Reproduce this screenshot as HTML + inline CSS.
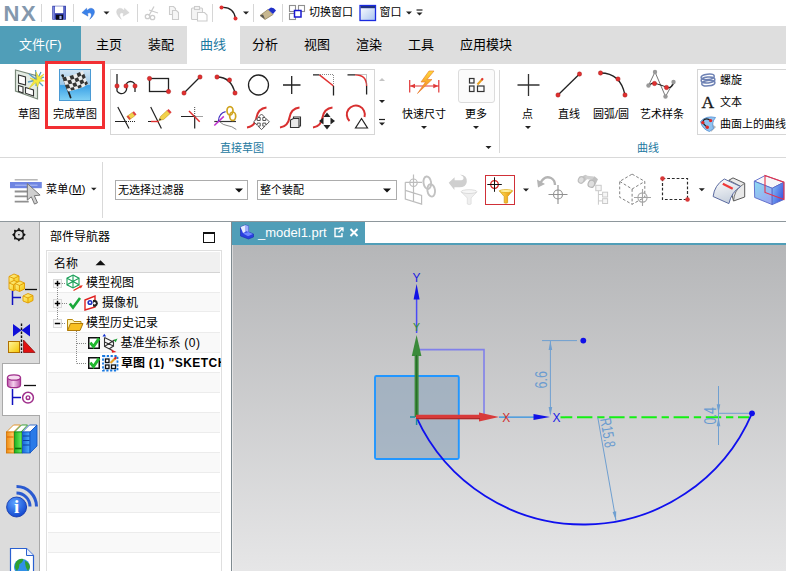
<!DOCTYPE html>
<html lang="zh-CN">
<head>
<meta charset="utf-8">
<title>NX</title>
<style>
html,body{margin:0;padding:0;}
body{width:786px;height:571px;overflow:hidden;background:#fff;position:relative;
 font-family:"Liberation Sans","Noto Sans CJK SC",sans-serif;font-size:11px;color:#000;}
.a{position:absolute;}
.t{position:absolute;white-space:nowrap;line-height:1;}
svg{position:absolute;overflow:visible;}
/* title bar */
#nx{left:3.500px;top:3px;font-size:22px;font-weight:bold;color:#8498ad;letter-spacing:1.700px;}
.vsep{position:absolute;width:1px;background:#d6d6d6;}
/* tab bar */
#tabbar{left:0;top:26px;width:786px;height:38px;background:#dedede;}
#filetab{left:0;top:26px;width:81px;height:38px;background:#509eb8;}
#acttab{left:187px;top:26px;width:53px;height:38px;background:#fff;}
.tab{font-size:13px;top:38px;color:#000;}
/* ribbon */
.rl{font-size:11px;top:109px;}
.gl{font-size:11px;color:#1b78a0;top:143px;}
</style>
</head>
<body>
<!-- TITLE BAR -->
<div class="t" id="nx">NX</div>
<div class="vsep" style="left:41px;top:4px;height:18px"></div>
<div class="vsep" style="left:73px;top:4px;height:18px"></div>
<div class="vsep" style="left:137px;top:4px;height:18px"></div>
<div class="vsep" style="left:212px;top:4px;height:18px"></div>
<div class="vsep" style="left:253px;top:4px;height:18px"></div>
<div class="vsep" style="left:282px;top:4px;height:18px"></div>
<!--TITLE-START-->
<svg style="left:0;top:0" width="786" height="26" viewBox="0 0 786 26">
 <defs><linearGradient id="wg" x1="0" y1="0" x2="1" y2="1"><stop offset="0" stop-color="#fff"/><stop offset="1" stop-color="#a8c4f0"/></linearGradient></defs>
 <!-- save -->
 <rect x="52.300" y="5.800" width="13.600" height="13.900" fill="#2c38a6"/>
 <rect x="53" y="6.500" width="1.600" height="12.500" fill="#7c86e0"/>
 <rect x="63.700" y="6.500" width="1.500" height="12.500" fill="#5a66cc"/>
 <rect x="55" y="6.300" width="8.300" height="6.900" fill="#fff"/>
 <rect x="56" y="14.800" width="7" height="4.900" fill="#0a0a18"/>
 <rect x="59.400" y="15.800" width="2.200" height="3.200" fill="#9fb0ee"/>
 <!-- undo -->
 <path d="M81.900 12.700 L86.600 8.200 L87 10.600 Q91 6.300 94 9.800 Q96 14 89.800 19.300 Q92.600 14.600 90.500 13.100 Q89 12.300 87.600 13.600 L88 16.200 Z" fill="#3a82ea" stroke="#2a62c8" stroke-width="0.400"/>
 <path d="M103.500 11.500 h6 l-3 3 z" fill="#222"/>
 <!-- redo grey -->
 <path d="M129.200 12.700 L124.500 8.200 L124.100 10.600 Q120.100 6.300 117.100 9.800 Q115.100 14 121.300 19.300 Q118.500 14.600 120.600 13.100 Q122.100 12.300 123.500 13.600 L123.100 16.200 Z" fill="#d8d8d8" stroke="#cccccc" stroke-width="0.400"/>
 <!-- scissors grey -->
 <g fill="none" stroke="#cccccc" stroke-width="1.300">
  <path d="M154 6.500 l-5 9 M149 10 l9 3"/><circle cx="147.500" cy="16.500" r="2.200"/><circle cx="152.500" cy="17.500" r="2.200"/>
 </g>
 <!-- copy grey -->
 <g fill="#f6f6f6" stroke="#cccccc" stroke-width="1.100">
  <path d="M169.500 6.500 h4 l2 2 v6 h-6 z"/><path d="M172.500 10.500 h4 l2 2 v7 h-6 z"/>
 </g>
 <!-- paste grey -->
 <g fill="#f4f4f4" stroke="#cccccc" stroke-width="1.100">
  <rect x="191.500" y="8" width="11" height="11.500" rx="1"/><rect x="194.500" y="6.500" width="5" height="3"/>
  <path d="M197.500 12.500 h7 l2.500 2.500 v6 h-9.500 z" fill="#fff"/>
 </g>
 <!-- arc icon -->
 <path d="M221.500 7.500 q12 -1 14 11" fill="none" stroke="#222" stroke-width="1.300"/>
 <circle cx="221.500" cy="7.500" r="2" fill="#e03030"/><circle cx="235.500" cy="18.500" r="2" fill="#e03030"/>
 <path d="M243 11.500 h6 l-3 3 z" fill="#222"/>
 <!-- brush -->
 <path d="M260 15.500 l8 -6 l5 5 l-8 5 z" fill="#c8b890" stroke="#8a7a50" stroke-width="0.700"/>
 <path d="M268 9.500 l3 -2 q3 0 5 3 l-3 3.500 z" fill="#2030c8"/>
 <path d="M260 15.500 l3 -1 l2 4.500 z" fill="#555"/>
 <!-- switch window -->
 <g fill="#fff" stroke="#909090" stroke-width="1.100">
  <rect x="289.500" y="5.500" width="6" height="6"/><rect x="298.500" y="5.500" width="6" height="6"/><rect x="289.500" y="13.500" width="6" height="6"/>
 </g>
 <rect x="294.500" y="10.500" width="6.500" height="6.500" fill="#fff" stroke="#1818d0" stroke-width="1.500"/>
 <!-- window -->
 <rect x="360" y="5.500" width="15.500" height="15" fill="url(#wg)" stroke="#1a2ae0" stroke-width="1.300"/>
 <rect x="360.500" y="6" width="14.500" height="2.200" fill="#203080"/>
 <path d="M406 11.500 h6 l-3 3 z" fill="#222"/>
 <path d="M416.500 10 h6" stroke="#222" stroke-width="1.200"/>
 <path d="M416.500 12.500 h6 l-3 3 z" fill="#222"/>
</svg>
<!--TITLE-END-->
<div class="t" style="left:309px;top:7px;font-size:11px">切换窗口</div>
<div class="t" style="left:379.500px;top:7px;font-size:11px">窗口</div>

<!-- TAB BAR -->
<div class="a" id="tabbar"></div>
<div class="a" id="filetab"></div>
<div class="a" id="acttab"></div>
<div class="t tab" style="left:19px;color:#fff">文件(F)</div>
<div class="t tab" style="left:96px">主页</div>
<div class="t tab" style="left:148px">装配</div>
<div class="t tab" style="left:200px;color:#1b78a0">曲线</div>
<div class="t tab" style="left:252px">分析</div>
<div class="t tab" style="left:304px">视图</div>
<div class="t tab" style="left:356px">渲染</div>
<div class="t tab" style="left:408px">工具</div>
<div class="t tab" style="left:460px">应用模块</div>

<!-- RIBBON -->
<!--RIBBON-START-->
<div class="a" style="left:0;top:157px;width:786px;height:1px;background:#d9d9d9"></div>
<!-- finish sketch highlight -->
<div class="a" style="left:59px;top:69px;width:32px;height:32px;box-sizing:border-box;border:1px solid #4a9ad4;background:linear-gradient(to bottom,#cfe3f3 0%,#9cc8ea 48%,#3aa0e6 52%,#7fd0f4 100%)"></div>
<div class="a" style="left:45px;top:61px;width:60px;height:68px;box-sizing:border-box;border:3px solid #f22f33"></div>
<div class="t rl" style="left:18px">草图</div>
<div class="t rl" style="left:53px">完成草图</div>
<!-- gallery -->
<div class="a" style="left:110px;top:69px;width:264.500px;height:66px;box-sizing:border-box;border:1px solid #d6d6d6"></div>
<div class="t gl" style="left:220px">直接草图</div>
<div class="t rl" style="left:402px">快速尺寸</div>
<div class="a" style="left:458px;top:69px;width:37px;height:34px;box-sizing:border-box;border:1px solid #dcdcdc;border-radius:3px;background:#fbfbfb"></div>
<div class="t rl" style="left:465px">更多</div>
<div class="vsep" style="left:499px;top:70px;height:83px;background:#d9d9d9"></div>
<div class="t rl" style="left:522px">点</div>
<div class="t rl" style="left:558px">直线</div>
<div class="t rl" style="left:593px">圆弧/圆</div>
<div class="t rl" style="left:640px">艺术样条</div>
<div class="t gl" style="left:637px">曲线</div>
<div class="a" style="left:697px;top:69px;width:100px;height:66px;box-sizing:border-box;border:1px solid #d6d6d6"></div>
<div class="t" style="left:720px;top:74.500px;font-size:11px">螺旋</div>
<div class="t" style="left:720px;top:96.500px;font-size:11px">文本</div>
<div class="t" style="left:720px;top:118.500px;font-size:11px">曲面上的曲线</div>
<div class="t" style="left:701.500px;top:93.500px;font-size:17.500px;font-family:'Liberation Serif',serif;color:#1a1a1a;-webkit-text-stroke:0.3px #1a1a1a">A</div>
<svg style="left:0;top:0" width="786" height="160" viewBox="0 0 786 160">
 <defs>
  <linearGradient id="lg" x1="0" y1="0" x2="0" y2="1"><stop offset="0" stop-color="#ffd83a"/><stop offset="1" stop-color="#f07a20"/></linearGradient>
  <g id="rd"><circle r="2.2" fill="#e03030"/><circle r="2.2" fill="none" stroke="#a01818" stroke-width="0.4"/></g>
  <path id="dn" d="M-3 -1.500 h6 l-3 3 z"/>
 </defs>
 <!-- sketch icon -->
 <g>
  <path d="M15.500 70 l22 6 v23 l-22 -8 z" fill="#e4ece4" stroke="#7a8a7a" stroke-width="1.200"/>
  <g fill="#fff" stroke="#333" stroke-width="1.100">
   <path d="M18.500 75 l7 2 v8 l-7 -2 z"/>
   <path d="M18.500 85.500 l4.500 1.400 v6 l-4.500 -1.600 z"/>
   <path d="M25.500 87.500 l8 2.500 v6 l-8 -2.800 z"/>
  </g>
  <g stroke="#5aa0c8" stroke-width="1.300">
   <path d="M35.500 70 l1.500 10 l-1 6 M29 74 l8 6 l6 6 M28 82 l9 -2 l7 -3 M41 72 l-4 8"/>
  </g>
  <path d="M37 80 l-1 -8 l3 5 l5 -3 l-3.500 5 l4 2 l-5 0.500 l-2 5.500 l-1.500 -4.500 l-7 6 l5 -7.500 l-4 -3 z" fill="#f4ea40" stroke="#d8c820" stroke-width="0.500"/>
 </g>
 <!-- flag -->
 <g>
  <path d="M62.800 76 l7.800 21.500" stroke="#222" stroke-width="1.800" stroke-linecap="round"/>
  <circle cx="62.600" cy="75.500" r="1.300" fill="#222"/>
  <g transform="translate(-0.500,2.200) scale(1.020,1.040) translate(-1.400,-3.200)">
  <path d="M63 75.500 q6 -1 11 -2.500 q5 -1.500 9 -4 l5 13 q-4 3 -9 4.500 q-5 1.500 -10.500 2.500 z" fill="#ececec"/>
  <g fill="#343434">
   <path d="M63 75.500 l3.500 -0.600 l1.400 3.600 l-3.600 0.700 z"/>
   <path d="M70 74.200 l3.500 -1 l1.400 3.500 l-3.500 1 z"/>
   <path d="M77 71.800 l3.300 -1.500 l1.400 3.400 l-3.300 1.600 z"/>
   <path d="M67.900 78.500 l3.500 -0.800 l1.400 3.600 l-3.500 0.800 z"/>
   <path d="M74.900 76.700 l3.400 -1.400 l1.400 3.500 l-3.400 1.400 z"/>
   <path d="M81.700 73.700 l2.800 -1.700 l1.400 3.500 l-2.800 1.700 z"/>
   <path d="M65.700 82.700 l3.600 -0.600 l1.400 3.600 l-3.600 0.700 z"/>
   <path d="M72.800 81.300 l3.500 -1.100 l1.400 3.500 l-3.500 1.100 z"/>
   <path d="M79.700 78.800 l3.400 -1.600 l1.400 3.500 l-3.400 1.600 z"/>
   <path d="M70.700 85.700 l3.500 -0.900 l1 2.600 l-3.500 0.800 z"/>
   <path d="M77.700 83.700 l3.400 -1.400 l1 2.600 l-3.400 1.400 z"/>
   <path d="M84.500 80.700 l2.600 -1.700 l1 2.600 l-2.600 1.700 z"/>
  </g>
  </g>
 </g>
 <!-- gallery row 1 -->
 <g fill="none" stroke="#222" stroke-width="1.300">
  <path d="M117 74 v17 a4.500 4.500 0 0 0 9 -5 a4.500 4.500 0 0 1 9 0 v6"/>
  <rect x="149.500" y="78.500" width="19" height="13"/>
  <path d="M184 93 L200 77"/>
  <path d="M217 77 q14 0 18 16"/>
  <circle cx="258.500" cy="85" r="10"/>
  <path d="M283 85 h17.500 M291.700 76 v18"/>
  <path d="M313 74.800 h6.500 M333.500 86 v9.500" />
  <path d="M347.500 74.800 h7.500 M366.600 86 v8.500"/>
 </g>
 <path d="M319.500 74.800 l14 11.200" stroke="#e03030" stroke-width="1.500" fill="none"/>
 <path d="M320 74.500 h13.500 v11" stroke="#888" stroke-width="1" stroke-dasharray="1 1" fill="none"/>
 <path d="M355 74.800 q11.600 0 11.600 11.200" stroke="#e03030" stroke-width="1.500" fill="none"/>
 <path d="M355.500 74.500 h11 v11" stroke="#888" stroke-width="1" stroke-dasharray="1 1" fill="none"/>
 <use href="#rd" x="117" y="86"/><use href="#rd" x="126" y="86"/><use href="#rd" x="135" y="86"/>
 <use href="#rd" x="149.500" y="78.500"/><use href="#rd" x="168.500" y="91.500"/>
 <use href="#rd" x="184" y="93"/><use href="#rd" x="200" y="77"/>
 <use href="#rd" x="217" y="77"/><use href="#rd" x="229.500" y="80"/><use href="#rd" x="235" y="93"/>
 <!-- gallery row 2 -->
 <g fill="none" stroke="#222" stroke-width="1.200">
  <path d="M117.800 107 l11.200 21.500 M115 121.500 h10.800"/>
  <path d="M150.700 107 l10.700 21.500 M148 121.500 h3"/>
  <path d="M181 116.500 h13.700 v12"/>
  <path d="M214.300 121.500 h21.700" stroke="#333"/>
  <path d="M220 122 q3 3 7 3.500 q5 0.500 9.300 4" stroke="#888" stroke-width="1"/>
 </g>
 <path d="M126 121.500 h10" stroke="#222" stroke-width="1" stroke-dasharray="1 1"/>
 <path d="M126.800 116.500 l5.500 -4 l2.600 3.300 l-5.500 4 z" fill="#f2d24a" stroke="#b88a10" stroke-width="0.500"/>
 <path d="M126.800 116.500 l1.400 -1 l2.600 3.300 l-1.400 1 z" fill="#e04040"/>
 <path d="M132.300 112.500 l1.600 -1.200 l2.600 3.300 l-1.600 1.200 z" fill="#e04040"/>
 <path d="M151 121.500 h7.800" stroke="#e03030" stroke-width="1.400"/>
 <path d="M158.800 120.500 l2 -4.300 l6.200 -5.700 l3 3.200 l-6.300 5.700 z" fill="#f2d24a" stroke="#b88a10" stroke-width="0.500"/>
 <path d="M158.800 120.500 l1 -2.200 l1.600 1.700 z" fill="#333"/>
 <path d="M167 110.500 l1.600 -1.500 l3 3.200 l-1.600 1.500 z" fill="#e04040"/>
 <path d="M189 111 l10.700 10.700" stroke="#e03030" stroke-width="1.500"/>
 <path d="M194.700 107 v9 M195.500 116.500 h8" stroke="#444" stroke-width="1" stroke-dasharray="1 1"/>
 <path d="M214.300 125.500 l9.500 -9.100" stroke="#c030d0" stroke-width="1.500"/>
 <path d="M218.400 121 q0.600 -8 7.200 -9.400" stroke="#4030c0" stroke-width="1.100" fill="none"/>
 <g fill="none" stroke="#d0a420" stroke-width="1.700">
  <ellipse cx="230" cy="110.800" rx="3" ry="4.200"/>
  <ellipse cx="232.700" cy="116.200" rx="3" ry="4.200"/>
 </g>
 <g fill="none" stroke="#d83030" stroke-width="2">
  <path d="M247 127.500 q8 -1 9.500 -10 q1.500 -9 10 -10"/>
  <path d="M280 127.500 q8 -1 9.500 -10 q1.500 -9 10 -10"/>
  <path d="M313 127.500 q8 -1 9.500 -10 q1.500 -9 10 -10"/>
  <path d="M349.500 121 a9 9 0 1 1 15 -4"/>
 </g>
 <!-- move arrows -->
 <g fill="#fff" stroke="#555" stroke-width="1">
  <path d="M261.500 114 l3.500 3.500 h-2.200 v3 h3 v-2.200 l3.500 3.500 l-3.500 3.500 v-2.200 h-3 v3 h2.200 l-3.500 3.500 l-3.500 -3.500 h2.200 v-3 h-3 v2.200 l-3.500 -3.500 l3.500 -3.500 v2.200 h3 v-3 h-2.200 z"/>
 </g>
 <g fill="#e8e8e8" stroke="#333" stroke-width="1.100">
  <path d="M293.500 117 h7 v9 h-7 z" fill="#fff"/>
  <path d="M290.500 120 l3 -1.500 h5.500 v9 h-8.500 z"/>
 </g>
 <g fill="#222">
  <path d="M327 112.500 l3.500 4.500 h-7 z"/><path d="M327 129.500 l3.500 -4.500 h-7 z"/>
  <path d="M319 121 l4.500 -3.500 v7 z"/><path d="M335 121 l-4.500 -3.500 v7 z"/>
 </g>
 <path d="M361.500 118.500 l6 9.500 h-12 z" fill="#fff" stroke="#222" stroke-width="1.200"/>
 <!-- gallery scroll -->
 <use href="#dn" x="382" y="79.500" fill="#c4c4c4" transform="rotate(180 382 79.500)"/>
 <use href="#dn" x="382" y="101.500" fill="#222"/>
 <path d="M379 119.500 h6" stroke="#222" stroke-width="1.200"/>
 <use href="#dn" x="382" y="124" fill="#222"/>
 <!-- rapid dimension -->
 <g stroke="#e03838" stroke-width="1.200" fill="none">
  <path d="M409.700 80 v12.500 M438.800 80 v12.500 M410 86 h28.500"/>
 </g>
 <path d="M410 86 l5 -2.300 v4.600 z M438.300 86 l-5 -2.300 v4.600 z" fill="#e03838"/>
 <path d="M429 71 l-8 11 h4.500 l-8 11.500 l14.500 -14 h-5 l7 -8.500 z" fill="url(#lg)" stroke="#e87828" stroke-width="0.600"/>
 <use href="#dn" x="424" y="127.500" fill="#222"/>
 <!-- more -->
 <g fill="none" stroke="#333" stroke-width="1.200">
  <rect x="469.500" y="78.500" width="4.500" height="4.500"/>
  <rect x="469.500" y="86" width="4.500" height="5.500"/>
  <rect x="477.500" y="86" width="6.500" height="5.500"/>
 </g>
 <path d="M477.500 84.500 l5 -5.500" stroke="#e8a020" stroke-width="2"/>
 <path d="M481.500 80 l1.500 -1.600" stroke="#e03030" stroke-width="2"/>
 <use href="#dn" x="476" y="127.500" fill="#222"/>
 <use href="#dn" x="488.500" y="147.500" fill="#222"/>
 <!-- point -->
 <path d="M517.500 85 h22 M528.500 74 v22" stroke="#333" stroke-width="1.300"/>
 <use href="#dn" x="528" y="127.500" fill="#222"/>
 <!-- line -->
 <path d="M558 95 L579.500 74" stroke="#222" stroke-width="1.300"/>
 <use href="#rd" x="558" y="95"/><use href="#rd" x="579.500" y="74"/>
 <!-- arc -->
 <path d="M600.500 73 q20 0 24.500 22" stroke="#222" stroke-width="1.300" fill="none"/>
 <use href="#rd" x="600.500" y="73"/><use href="#rd" x="618" y="79"/><use href="#rd" x="625" y="95"/>
 <!-- studio spline -->
 <path d="M648.500 85.500 l6.500 -13.500 l10.500 24.500 l8 -14.500" stroke="#777" stroke-width="1" fill="none"/>
 <path d="M648.500 85.500 q5 -4 7 -2 q4 1 12 4 q4 1 6.500 -5" stroke="#222" stroke-width="1.200" fill="none"/>
 <g fill="#999"><circle cx="655" cy="72" r="2.200"/><circle cx="648.500" cy="85.500" r="2.200"/><circle cx="665.500" cy="96.500" r="2.200"/><circle cx="673.500" cy="82" r="2.200"/></g>
 <use href="#rd" x="654.500" y="83.500"/><use href="#rd" x="666.500" y="87.500"/>
 <!-- helix -->
 <g fill="none" stroke="#6e82b4" stroke-width="1.500" transform="rotate(-6 708 80)">
  <ellipse cx="708" cy="76.800" rx="6.600" ry="2.700"/>
  <ellipse cx="708" cy="80" rx="6.900" ry="2.900"/>
  <ellipse cx="708" cy="83.200" rx="6.600" ry="2.700"/>
 </g>
 <!-- curve on surface -->
 <path d="M712 124 l4 3 l-5 5 z" fill="#b8b8b8"/>
 <path d="M700.500 121.500 Q706 115.300 715.500 117.500 Q711.200 122.500 713.500 128.500 L709.500 131.500 Q702.500 129.500 700.500 121.500 Z" fill="#8fc2f0" stroke="#5c96d6" stroke-width="0.900"/>
 <path d="M707.300 127.200 Q700.500 122.500 704.300 119.600 Q707.500 117.800 710.600 120.600" stroke="#222" stroke-width="1.200" fill="none"/>
 <circle cx="702.800" cy="122.600" r="1.700" fill="#e02828"/><circle cx="710.600" cy="120.600" r="1.700" fill="#e02828"/><circle cx="707.300" cy="127.200" r="1.700" fill="#e02828"/>
</svg>
<!--RIBBON-END-->

<!-- TOOLBAR -->
<!--TOOLBAR-START-->
<div class="vsep" style="left:102px;top:162px;height:56px;background:#d9d9d9"></div>
<div class="t" style="left:46px;top:184px;font-size:11px;letter-spacing:0.2px">菜单(<span style="text-decoration:underline">M</span>)</div>
<div class="a" style="left:115px;top:180px;width:133px;height:20px;box-sizing:border-box;border:1px solid #acacac;background:#fff"></div>
<div class="a" style="left:257px;top:180px;width:140px;height:20px;box-sizing:border-box;border:1px solid #acacac;background:#fff"></div>
<div class="t" style="left:118px;top:185px;font-size:11px">无选择过滤器</div>
<div class="t" style="left:260px;top:185px;font-size:11px">整个装配</div>
<div class="a" style="left:485px;top:175px;width:30px;height:30px;box-sizing:border-box;border:1px solid #d03038;background:#fff"></div>
<svg style="left:0;top:158px" width="786" height="64" viewBox="0 158 786 64">
 <defs>
  <linearGradient id="tm" x1="0" y1="0" x2="0" y2="1"><stop offset="0" stop-color="#8aa0f0"/><stop offset="1" stop-color="#4a6ae0"/></linearGradient>
  <linearGradient id="fy" x1="0" y1="0" x2="1" y2="0"><stop offset="0" stop-color="#ffe060"/><stop offset="1" stop-color="#e89000"/></linearGradient>
  <linearGradient id="sh8" x1="0.3" y1="0" x2="0.6" y2="1"><stop offset="0" stop-color="#fafafa"/><stop offset="1" stop-color="#c4cedc"/></linearGradient><linearGradient id="c9a" x1="0" y1="0" x2="0.6" y2="1"><stop offset="0" stop-color="#8adcf2"/><stop offset="1" stop-color="#9aa8f0"/></linearGradient><linearGradient id="c9b" x1="0" y1="0" x2="1" y2="0.6"><stop offset="0" stop-color="#88c0f4"/><stop offset="1" stop-color="#3c58e0"/></linearGradient>
 </defs>
 <!-- menu icon -->
 <path d="M14.700 179.800 h23" stroke="#b0b0b0" stroke-width="1.400"/>
 <rect x="10" y="182" width="31.800" height="6.200" fill="#6f85e2"/>
 <path d="M15 185.200 h22.500" stroke="#aab8f2" stroke-width="1.200"/>
 <path d="M14.700 191.500 h14 M14.700 196.400 h14 M14.700 201.600 h14" stroke="#909090" stroke-width="1.800"/>
 <path d="M27.300 183.600 v16.500 l4 -3.300 l3.200 7.300 l3 -1.400 l-3.200 -7 l5.800 -0.600 z" fill="#cfcfcf" stroke="#777" stroke-width="1"/>
 <path d="M91 187.700 h5.600 l-2.800 2.800 z" fill="#222"/>
 <path d="M235 188.500 h8 l-4 4 z" fill="#111"/>
 <path d="M383 188.500 h8 l-4 4 z" fill="#111"/>
 <!-- icon1 grey -->
 <g fill="none" stroke="#bdbdbd" stroke-width="1.200">
  <path d="M405.300 182.300 H422 M405.300 182.300 V199 L421.600 204.100 V195.400 L405.300 190.400 M413.500 174.600 V201.500"/>
  <circle cx="413.500" cy="182.700" r="3.700"/>
 </g>
 <g fill="none" stroke="#c2c2c2" stroke-width="1.900">
  <ellipse cx="427.300" cy="182.700" rx="3.800" ry="6.300" transform="rotate(-8 427.300 182.700)"/>
  <ellipse cx="431.200" cy="190.400" rx="3.800" ry="6.300" transform="rotate(-8 431.200 190.400)"/>
 </g>
 <!-- icon2 grey -->
 <path d="M448.700 182.700 L454.600 177.300 V180.300 H461.500 Q464.500 179.500 463 176.500 L460 174.600 Q467.500 175.500 466.800 182 Q466 187.300 459.500 187.300 H454.400 V190 Z" fill="#cfcfcf"/>
 <path d="M461.300 192 L467.300 198 V204 Q469.200 205 471.100 204 V198 L476.800 192 Z" fill="#efefef" stroke="#dcdcdc" stroke-width="0.800"/>
 <ellipse cx="469" cy="191.600" rx="7.800" ry="1.900" fill="#f6f6f6" stroke="#d6d6d6" stroke-width="0.800"/>
 <!-- icon3 -->
 <circle cx="494.500" cy="184.500" r="3.800" fill="none" stroke="#d82020" stroke-width="1.300"/>
 <path d="M494.500 177.300 v14.500 M487.300 184.500 h14.500" stroke="#111" stroke-width="1"/>
 <path d="M499.300 190.800 h13.300 l-5 5.700 v6.300 q-1.700 0.900 -3.400 0 v-6.300 z" fill="url(#fy)" stroke="#d09a10" stroke-width="0.700"/>
 <ellipse cx="505.950" cy="191" rx="6.500" ry="1.500" fill="#fff0a0" stroke="#d8a000" stroke-width="0.600"/>
 <path d="M523 188.500 h6 l-3 3 z" fill="#222"/>
 <!-- icon4 -->
 <path d="M540 184 q4 -9 11 -6 q4 2 4 7" fill="none" stroke="#b4b4b4" stroke-width="2.400"/>
 <path d="M537 179.500 l1 8 l7 -3.500 z" fill="#b4b4b4"/>
 <circle cx="558" cy="194.500" r="4.500" fill="none" stroke="#909090" stroke-width="1.100"/>
 <path d="M558 185 v19 M548.500 194.500 h19" stroke="#909090" stroke-width="1.100"/>
 <!-- icon5 binoculars -->
 <g>
  <path d="M578.600 178 L585.500 174.800 L589 177 L583.800 182.600 Z" fill="#c6c6c6"/>
  <path d="M588.300 181.200 L594.500 176.300 L598 179.300 L594.600 186.300 Z" fill="#c0c0c0"/>
  <path d="M585 175.500 L594 176.500 L592 180 L586 179 Z" fill="#d0d0d0"/>
  <ellipse cx="581.200" cy="180" rx="2.800" ry="3.300" fill="#dedede" stroke="#bcbcbc" stroke-width="1.100" transform="rotate(25 581.200 180)"/>
  <ellipse cx="591.400" cy="183.800" rx="3.200" ry="3.600" fill="#dedede" stroke="#b8b8b8" stroke-width="1.200" transform="rotate(25 591.400 183.800)"/>
 </g>
 <g fill="#f6f6f6" stroke="#cacaca" stroke-width="1">
  <path d="M598.400 190.700 V204.700 M598.400 194.500 H602.400 M598.400 200.900 H602.400" fill="none"/>
  <rect x="595.800" y="185.300" width="5.400" height="5.400"/><rect x="602.600" y="192.200" width="5" height="4.800"/><rect x="602.600" y="198.700" width="5" height="4.800"/>
 </g>
 <!-- icon6 dashed cube -->
 <g fill="none" stroke="#808080" stroke-width="1" stroke-dasharray="2.800 2">
  <path d="M632.100 174.100 L644.800 181.400 V197.300 L632.100 204.300 L619.700 197.300 V181.400 Z M619.700 181.400 L632.100 189 L644.800 181.400 M632.100 189 V204.300"/>
 </g>
 <circle cx="642.500" cy="197.500" r="4.600" fill="none" stroke="#a4a4a4" stroke-width="1.100"/>
 <path d="M642.500 189 v17 M634 197.500 h17" stroke="#a4a4a4" stroke-width="1.100"/>
 <!-- icon7 -->
 <rect x="662.500" y="178.500" width="25" height="21" fill="none" stroke="#2a2a2a" stroke-width="1.200" stroke-dasharray="2.800 1.900"/>
 <circle cx="662.500" cy="178.500" r="2.300" fill="#d83838"/><circle cx="687.500" cy="199.500" r="2.300" fill="#d83838"/>
 <path d="M698.800 188.300 h6 l-3 3 z" fill="#222"/>
 <!-- icon8 -->
 <path d="M728.900 180.200 l4.100 -2.300 l11.700 5.300 v13.800 l-11.200 4 l-2 -8 z" fill="#e9e9e9" stroke="#5a5a5a" stroke-width="1"/>
 <path d="M728.900 180.200 l11.700 6.100 l4.100 -3.100 M740.600 186.300 q-6 4 -7.100 14.700" fill="none" stroke="#6a6a6a" stroke-width="0.900"/>
 <path d="M724.300 179 L740.600 186.500 Q731.500 192 728.900 203.600 L713.100 196.500 Q714.500 185 724.300 179 Z" fill="url(#sh8)" stroke="#5a6aa0" stroke-width="1"/>
 <path d="M722.800 183.700 L732.700 188.800" stroke="#f03838" stroke-width="2.200"/>
 <!-- icon9 cube -->
 <path d="M754.300 181.200 L765 175.600 L783.900 182.200 L772.200 188.300 Z" fill="#f6f6f8" stroke="#5868c8" stroke-width="0.900"/>
 <path d="M754.300 181.200 L772.200 188.300 L772.200 204.600 L754.700 197.500 Z" fill="url(#c9a)" stroke="#5868c8" stroke-width="0.900"/>
 <path d="M772.200 188.300 L783.900 182.200 L783.900 199.500 L772.200 204.600 Z" fill="url(#c9b)" stroke="#5868c8" stroke-width="0.900"/>
 <path d="M765 175.600 L783.900 182.200 L783.900 199.500 L765 192.400 Z" fill="none" stroke="#e83048" stroke-width="1.100"/>
</svg>
<!--TOOLBAR-END-->

<!-- SIDEBAR + NAVIGATOR -->
<!--NAV-START-->
<div class="a" style="left:0;top:222px;width:39px;height:349px;background:#dcdcdc"></div>
<div class="a" style="left:39px;top:222px;width:1px;height:349px;background:#a9a9a9"></div>
<div class="a" style="left:2px;top:363px;width:38px;height:53px;background:#fff;border:1px solid #a9a9a9;border-right:none;box-sizing:border-box"></div>
<div class="t" style="left:50px;top:231px;font-size:12px">部件导航器</div>
<div class="a" style="left:203px;top:232px;width:10px;height:8px;border:1px solid #111;border-top-width:2px;box-sizing:content-box"></div>
<!-- table -->
<div class="a" style="left:46px;top:250px;width:176px;height:321px;border:1px solid #dfdfdf;border-bottom:none;box-sizing:border-box;background:#fff"></div>
<div class="a" style="left:48px;top:252px;width:172px;height:20px;background:#f0f0f0;border-bottom:1px solid #d4d4d4"></div>
<div class="a" style="left:48px;top:292px;width:172px;height:20px;background:#f9f9f9;border-top:1px solid #ececec;border-bottom:1px solid #ececec;box-sizing:border-box"></div>
<div class="a" style="left:48px;top:332px;width:172px;height:21px;background:#f9f9f9;border-top:1px solid #ececec;border-bottom:1px solid #ececec;box-sizing:border-box"></div>
<div class="a" style="left:48px;top:372px;width:172px;height:21px;background:#f9f9f9;border-top:1px solid #ececec;border-bottom:1px solid #ececec;box-sizing:border-box"></div>
<div class="a" style="left:48px;top:412px;width:172px;height:21px;background:#f9f9f9;border-top:1px solid #ececec;border-bottom:1px solid #ececec;box-sizing:border-box"></div>
<div class="a" style="left:48px;top:452px;width:172px;height:21px;background:#f9f9f9;border-top:1px solid #ececec;border-bottom:1px solid #ececec;box-sizing:border-box"></div>
<div class="a" style="left:48px;top:492px;width:172px;height:21px;background:#f9f9f9;border-top:1px solid #ececec;border-bottom:1px solid #ececec;box-sizing:border-box"></div>
<div class="a" style="left:48px;top:532px;width:172px;height:21px;background:#f9f9f9;border-top:1px solid #ececec;border-bottom:1px solid #ececec;box-sizing:border-box"></div>
<div class="t" style="left:54px;top:258px;font-size:12px">名称</div>
<div class="t" style="left:86px;top:277px;font-size:12px">模型视图</div>
<div class="t" style="left:102px;top:297px;font-size:12px">摄像机</div>
<div class="t" style="left:86px;top:317px;font-size:12px">模型历史记录</div>
<div class="t" style="left:120.500px;top:337px;font-size:12px">基准坐标系<span style="letter-spacing:0.5px"> (0)</span></div>
<div class="t" style="left:121px;top:357px;font-size:12px;font-weight:bold;width:100px;overflow:hidden">草图<span style="letter-spacing:0.45px"> (1) "SKETCH_000"</span></div>
<svg style="left:0;top:0" width="232" height="571" viewBox="0 0 232 571">
 <!-- sort triangle -->
 <path d="M95.500 265.200 l5 -5 l5 5 z" fill="#111"/>
 <!-- tree dotted lines -->
 <g stroke="#8a8a8a" stroke-width="1" stroke-dasharray="1 1" fill="none">
  <path d="M57.5 288 V319"/>
  <path d="M62 283.5 H66"/><path d="M62 303.5 H68"/><path d="M62 323.5 H66"/>
  <path d="M76.5 331 V363.5"/>
  <path d="M77 343.5 H86"/><path d="M77 363.5 H86"/>
 </g>
 <!-- expand boxes -->
 <g fill="#f9f9f9" stroke="#dadada" stroke-width="1">
  <rect x="53.5" y="279.5" width="8" height="8"/>
  <rect x="53.5" y="299.5" width="8" height="8"/>
  <rect x="53.5" y="319.5" width="8" height="8"/>
 </g>
 <g stroke="#000" stroke-width="1.500" fill="none">
  <path d="M54.800 283.500 h5.400 M57.500 280.800 v5.400"/>
  <path d="M54.800 303.500 h5.400 M57.500 300.800 v5.400"/>
  <path d="M54.800 323.500 h5.400"/>
 </g>
 <!-- model view icon: green wire cube -->
 <g fill="none" stroke="#1aa058" stroke-width="1.100">
  <path d="M73 275 l6 3.200 v6.600 l-6 3.200 l-6 -3.200 v-6.600 z"/>
  <path d="M67 278.200 l6 3.200 l6 -3.200 M73 275 v13 M67 284.800 l6 -3.400 l6 3.400"/>
 </g>
 <path d="M73.500 290.500 l7 -3.800" stroke="#e83020" stroke-width="1.400"/>
 <path d="M82.800 285.300 l-3.800 0.400 l1.800 2.800 z" fill="#e83020"/>
 <!-- check green -->
 <path d="M69.800 303.500 l3.200 4 l7 -9.500" fill="none" stroke="#1aa83a" stroke-width="2.600"/>
 <!-- camera icon -->
 <g>
  <path d="M85 300 l10 -4 v11 l-10 3 z" fill="#fff" stroke="#e02020" stroke-width="1.4"/>
  <circle cx="90" cy="302.5" r="2.6" fill="#2030c0"/>
  <circle cx="90" cy="302.5" r="1" fill="#fff"/>
  <path d="M93 300 a3.5 3.5 0 1 1 0 6.5 z" fill="#222"/>
  <circle cx="94.5" cy="303.2" r="1.2" fill="#fff"/>
 </g>
 <!-- folder -->
 <g>
  <path d="M67.5 330.5 v-11 h5 l1.5 2 h7 v3" fill="#fff3b0" stroke="#b88a10" stroke-width="1"/>
  <path d="M67.5 330.5 l3 -7 h12.5 l-3 7 z" fill="#f8c020" stroke="#b07a08" stroke-width="1"/>
 </g>
 <!-- checkboxes -->
 <g>
  <rect x="88.750" y="337.750" width="10.500" height="10.500" fill="#fff" stroke="#111" stroke-width="1.500"/>
  <path d="M90.300 342.600 l3.200 4 l5.600 -8.200" fill="none" stroke="#22b830" stroke-width="3"/>
  <rect x="88.750" y="357.750" width="10.500" height="10.500" fill="#fff" stroke="#111" stroke-width="1.500"/>
  <path d="M90.300 362.600 l3.200 4 l5.600 -8.200" fill="none" stroke="#22b830" stroke-width="3"/>
 </g>
 <!-- csys icon -->
 <g fill="none" stroke="#333" stroke-width="1.100">
  <path d="M104.500 337.500 v9 l8 4 M104.500 346.500 l10 -6.500 M104.500 337.500 l9 4.500 v4 l-9 -4 M113.500 346 l-4.500 3"/>
 </g>
 <path d="M102.500 336.500 l1.800 -2.800 l1.800 2.800 z" fill="#1030d0"/>
 <path d="M113.500 340 l4 -1.500 l-1.800 3.800 z" fill="#18a030"/>
 <path d="M111.500 349.500 l5 2.500 l-4.500 0.800 z" fill="#e02020"/>
 <!-- sketch icon -->
 <rect x="103" y="356" width="14.500" height="14.500" fill="#eaf4ff" stroke="#1878e0" stroke-width="1.800" stroke-dasharray="2.200 1.600"/>
 <g fill="#fff" stroke="#111" stroke-width="1.300">
  <rect x="105.500" y="359" width="3.500" height="3.500"/>
  <rect x="105.500" y="365" width="3.500" height="3.500"/>
  <rect x="111.500" y="365" width="4" height="3.500"/>
 </g>
 <path d="M110.500 363 l4.500 -4.500" stroke="#e8a020" stroke-width="2.200"/>
 <path d="M114.500 359 l1.800 -1.800" stroke="#e02020" stroke-width="2.200"/>
 <!--SIDE-START-->
 <defs>
  <linearGradient id="gy" x1="0" y1="0" x2="1" y2="1"><stop offset="0" stop-color="#fff6a0"/><stop offset="1" stop-color="#f5c400"/></linearGradient>
  <linearGradient id="gp" x1="0" y1="0" x2="1" y2="0"><stop offset="0" stop-color="#c060b0"/><stop offset="0.45" stop-color="#f4d0ec"/><stop offset="1" stop-color="#b850a8"/></linearGradient>
  <radialGradient id="gi" cx="0.4" cy="0.3" r="0.8"><stop offset="0" stop-color="#5aa0ff"/><stop offset="1" stop-color="#0a3cc8"/></radialGradient>
  <linearGradient id="go" x1="0" y1="0" x2="1" y2="0"><stop offset="0" stop-color="#f08a10"/><stop offset="1" stop-color="#ffd070"/></linearGradient>
  <linearGradient id="gg" x1="0" y1="0" x2="1" y2="0"><stop offset="0" stop-color="#20b020"/><stop offset="1" stop-color="#70f060"/></linearGradient>
  <linearGradient id="gb" x1="0" y1="0" x2="1" y2="0"><stop offset="0" stop-color="#1868d8"/><stop offset="1" stop-color="#50b0ff"/></linearGradient>
 </defs>
 <!-- gear -->
 <g transform="translate(18.900,234.700)">
  <circle r="4.500" fill="none" stroke="#111" stroke-width="1.500"/>
  <rect x="-0.800" y="-0.600" width="1.600" height="1.200" fill="#222"/>
  <g fill="#111"><path d="M-1.700 -4.900 L0 -6.900 L1.700 -4.900 z" transform="rotate(0)"/><path d="M-1.700 -4.900 L0 -6.900 L1.700 -4.900 z" transform="rotate(45)"/><path d="M-1.700 -4.900 L0 -6.900 L1.700 -4.900 z" transform="rotate(90)"/><path d="M-1.700 -4.900 L0 -6.900 L1.700 -4.900 z" transform="rotate(135)"/><path d="M-1.700 -4.900 L0 -6.900 L1.700 -4.900 z" transform="rotate(180)"/><path d="M-1.700 -4.900 L0 -6.900 L1.700 -4.900 z" transform="rotate(225)"/><path d="M-1.700 -4.900 L0 -6.900 L1.700 -4.900 z" transform="rotate(270)"/><path d="M-1.700 -4.900 L0 -6.900 L1.700 -4.900 z" transform="rotate(315)"/></g>
 </g>
 <!-- assembly navigator -->
 <g stroke="#e09a00" stroke-width="0.9" fill="url(#gy)">
  <path d="M9 276.5 l5 -2.5 l5 2 v6.500 l-5 2.500 l-5 -2 z"/>
  <path d="M9 276.5 l5 2 l5 -2.500 M14 278.500 v6.500" fill="none"/>
  <path d="M9 283 l5 -2.500 l4 1.6 v6.4 l-4.500 2.300 l-4.500 -1.800 z"/>
  <path d="M9 283 l4.500 1.800 l4.500 -2.300 M13.500 284.800 v6" fill="none"/>
  <path d="M15 283.5 l5 -2.500 l4.500 2 v6 l-5 2.500 l-4.500 -2 z"/>
  <path d="M15 283.5 l4.500 2 l5 -2.500 M19.500 285.500 v6" fill="none"/>
  <path d="M23 296 l5 -2.500 l5 2 v5 l-5 2.500 l-5 -2 z"/>
  <path d="M23 296 l5 2 l5 -2.500 M28 298 v5" fill="none"/>
 </g>
 <path d="M25 289.500 H37" stroke="#111" stroke-width="1.3"/>
 <path d="M12.500 291 V305 M12.500 297.500 H21" stroke="#1010c0" stroke-width="1.5" fill="none"/>
 <!-- constraint navigator -->
 <path d="M13 324 l8.500 6.300 l8.500 -6.300 v12.600 l-8.500 -6.300 l-8.500 6.300 z" fill="#1010d8"/>
 <path d="M21.500 323.500 V353" stroke="#111" stroke-width="1.4" stroke-dasharray="2.5 1.5"/>
 <rect x="8.500" y="341.500" width="11" height="11" fill="url(#gy)" stroke="#b07000" stroke-width="1"/>
 <path d="M23.500 340 V352.500 H35 z" fill="#e01010" stroke="#901010" stroke-width="0.8"/>
 <!-- part navigator (selected) -->
 <path d="M7.500 377.500 v7.500 a6.500 2.700 0 0 0 13 0 v-7.500" fill="url(#gp)" stroke="#a0308c" stroke-width="1.3"/>
 <ellipse cx="14" cy="377.500" rx="6.500" ry="2.700" fill="#f6dcf0" stroke="#a0308c" stroke-width="1.3"/>
 <path d="M24 385.500 H36" stroke="#111" stroke-width="1.3"/>
 <path d="M12.500 389 V405 M12.500 397.500 H21" stroke="#1010c0" stroke-width="1.5" fill="none"/>
 <circle cx="28" cy="397.700" r="5.400" fill="#fff" stroke="#a0308c" stroke-width="1.5"/>
 <circle cx="28" cy="397.700" r="1.800" fill="none" stroke="#a0308c" stroke-width="1.400"/>
 <!-- books -->
 <g stroke-width="0.8">
  <path d="M6.500 432 l7 -7 h7 l-7 7 z" fill="#fff" stroke="#e08000"/>
  <path d="M14.500 432 l7 -7 h6 l-6.500 7 z" fill="#fff" stroke="#109010"/>
  <path d="M22.500 432 l7 -7 h7.500 l-7 7 z" fill="#fff" stroke="#1050c0"/>
  <rect x="6.500" y="432" width="7.500" height="21" fill="url(#go)" stroke="#d07000"/>
  <rect x="14.500" y="432" width="7.500" height="21" fill="url(#gg)" stroke="#108810"/>
  <rect x="22.500" y="432" width="7.500" height="21" fill="url(#gb)" stroke="#1050c0"/>
  <path d="M30 432 l7 -7 v21 l-7 7 z" fill="#2a7ae8" stroke="#1050c0"/>
  <path d="M7 437 h6.500 M7 449 h6.500" stroke="#e06000" stroke-width="1.2"/>
  <path d="M15 448.500 h6.500" stroke="#0a700a" stroke-width="1.6"/>
  <path d="M23 436 h6.500 M23 440.500 h6.500 M23 445 h6.500" stroke="#0a40a0" stroke-width="1"/>
 </g>
 <!-- info / rss -->
 <g fill="none" stroke="#2a5ad0" stroke-width="3">
  <path d="M16.500 486.500 a20 20 0 0 1 20 20"/>
  <path d="M16.500 493 a13.500 13.500 0 0 1 13.500 13.500"/>
 </g>
 <circle cx="16.600" cy="507" r="10" fill="url(#gi)" stroke="#0a30a8" stroke-width="0.8"/>
 <text x="16.700" y="513" font-family="Liberation Serif, serif" font-weight="bold" font-size="19" fill="#fff" text-anchor="middle">i</text>
 <!-- page with globe -->
 <path d="M10.500 548.500 h16 l7 7 v18 h-23 z" fill="#fff" stroke="#2a60d0" stroke-width="1.2"/>
 <path d="M26.500 548.500 v7 h7" fill="#e8f0ff" stroke="#2a60d0" stroke-width="1"/>
 <circle cx="22" cy="567" r="8" fill="#3090e8"/>
 <path d="M15.500 563 q3 -5 8 -4 q-1 4 -4 5 q0 4 -2.500 7 q-3 -3 -1.500 -8 z M25 561 q4 1 5 6 l-2 4 q-3 -4 -3 -10 z" fill="#30a030"/>
 <!--SIDE-END-->
</svg>
<!--NAV-END-->

<!-- GRAPHICS -->
<!--GFX-START-->
<div class="a" style="left:0;top:221px;width:786px;height:1px;background:#8e979c"></div>
<div class="a" style="left:232px;top:222px;width:133px;height:23px;background:#509eb8"></div>
<div class="a" style="left:232px;top:243px;width:554px;height:2px;background:#509eb8"></div>
<div class="t" style="left:258px;top:226px;font-size:13px;color:#fff">_model1.prt</div>
<div class="a" id="gfx" style="left:232px;top:245px;width:554px;height:326px;background:linear-gradient(to bottom,#b5b6b8 0%,#e6e6e7 100%)"></div>
<div class="a" style="left:231px;top:222px;width:1px;height:349px;background:#7f8a90"></div>
<div class="a" style="left:232px;top:245px;width:1px;height:326px;background:rgba(255,255,255,0.45)"></div>
<svg style="left:0;top:0" width="786" height="571" viewBox="0 0 786 571">
 <!-- doc tab icon -->
 <g>
  <path d="M240.5 227 l5 -2 l3 1 v6 l5 2 v3 l-5 2 l-8 -3 z" fill="#2a3fe0" stroke="#1a2ab0" stroke-width="0.6"/>
  <path d="M245.5 225 l3 1 v6 l-3 -1 z" fill="#9fb0ff"/>
  <path d="M240.5 227 l5 -2 v7 l-2.5 1 z" fill="#e8ecff"/>
  <path d="M243 233.5 l5.5 -1.5 l4.5 2 l-5 2.2 z" fill="#6f86ff"/>
 </g>
 <!-- float + close icons -->
 <g stroke="#fff" fill="none" stroke-width="1.4">
  <path d="M340 228.5 h-5 v8 h7 v-3.5"/>
  <path d="M338.5 232.5 l4 -4 M339.5 228 h3.5 v3.5" stroke-width="1.3"/>
  <path d="M350.5 229 l7 7 M357.5 229 l-7 7" stroke-width="2"/>
 </g>
 <!-- datum plane square -->
 <rect x="375" y="376" width="83.800" height="83" rx="1.500" fill="#8ea4ba" fill-opacity="0.640" stroke="#2196ff" stroke-width="1.900"/>
 <!-- purple box lines -->
 <path d="M417 349.600 H484 V414" fill="none" stroke="#8080ea" stroke-width="1.600"/>
 <!-- blue Y axis thin -->
 <path d="M416.600 299 V333" stroke="#4a4af6" stroke-width="1.500"/>
 <path d="M416.6 284 l3 15.5 h-6 z" fill="#1212e6"/>
 <text x="416.6" y="281.5" font-size="12" fill="#2020e0" text-anchor="middle" font-family="Liberation Sans, sans-serif">Y</text>
 <text x="416.6" y="331" font-size="10.500" fill="#2f8f2f" text-anchor="middle" font-family="Liberation Sans, sans-serif">Y</text>
 <!-- thin X axis -->
 <path d="M499 417.200 H534" stroke="#2c8fe0" stroke-width="1.200"/>
 <path d="M550 417 l-16.5 -3 v6 z" fill="#1212e6"/>
 <!-- green dashed -->
 <path d="M560.500 417.300 H565" stroke="#14f014" stroke-width="2"/>
 <path d="M565 417.300 H749" stroke="#14f014" stroke-width="2" stroke-dasharray="7.300 4.700 15.400 4.800"/>
 <!-- arc -->
 <path d="M416.5 417.4 A183.5 183.5 0 0 0 752 413.3" fill="none" stroke="#1010ee" stroke-width="1.8"/>
 <!-- green Y arrow -->
 <path d="M414.6 417 V355 h4 V417 z" fill="#3a8a3a"/>
 <path d="M416.6 335 l4.8 21 h-9.6 z" fill="#3a8a3a"/>
 <path d="M416.6 355 V417" stroke="#2a6a2a" stroke-width="1"/>
 <!-- red X arrow -->
 <path d="M416 414.8 H480 v4.4 H416 z" fill="#d83a3a"/>
 <path d="M499 417 l-20 -4.6 v9.2 z" fill="#d83a3a"/>
 <path d="M416 418.6 H480" stroke="#a82828" stroke-width="1"/>
 <!-- origin marker -->
 <path d="M410 417 h5 M416.6 419 v6" stroke="#1a8aa0" stroke-width="1.5"/>
 <text x="506.3" y="421.5" font-size="12" fill="#d03030" text-anchor="middle" font-family="Liberation Sans, sans-serif">X</text>
 <text x="556.5" y="421.5" font-size="12" fill="#1a1ae6" text-anchor="middle" font-family="Liberation Sans, sans-serif">X</text>
 <!-- dots -->
 <circle cx="583.3" cy="340.6" r="2.900" fill="#1010e8"/>
 <circle cx="752" cy="413.3" r="2.900" fill="#1010e8"/>
 <!-- dimensions -->
 <g stroke="#6f9fd0" stroke-width="1" fill="none">
  <path d="M542 340.6 H577"/>
  <path d="M550.4 341 V414"/>
  <path d="M718.5 386 V445"/>
  <path d="M718 413.3 H749"/>
  <path d="M597.8 417.5 L616 520.5"/>
 </g>
 <g fill="#6f9fd0">
  <path d="M550.4 341 l1.8 9 h-3.6 z"/>
  <path d="M550.4 416 l1.8 -9 h-3.6 z"/>
  <path d="M718.5 413.3 l1.8 -9 h-3.6 z"/>
  <path d="M718.5 417.2 l1.8 9 h-3.6 z"/>
  <path d="M616 520.5 l-3.4 -8.6 l3.6 -0.6 z"/>
 </g>
 <g fill="#6a9bd0" font-size="16.500" font-family="Liberation Sans, sans-serif">
  <text transform="translate(547,388.500) rotate(-90) scale(0.760,1)">6.6</text>
  <text transform="translate(716,424.500) rotate(-90) scale(0.760,1)">0.4</text>
  <text transform="translate(600,419) rotate(80) scale(0.720,1)" font-size="15.500">R15.8</text>
 </g>
</svg>
<!--GFX-END-->
</body>
</html>
